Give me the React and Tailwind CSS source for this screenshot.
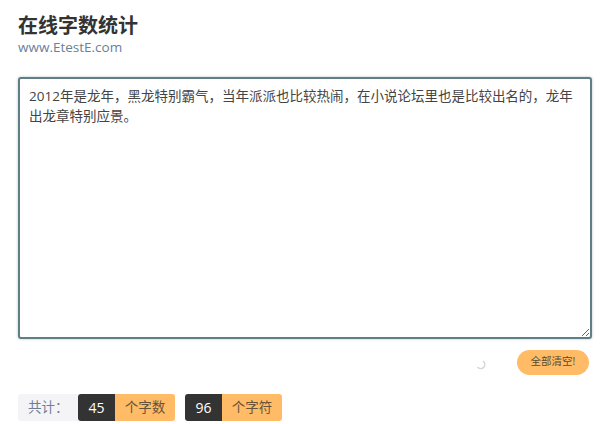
export default function App() {
  return (
    <div className="w-[600px] h-[424px] overflow-hidden bg-white pl-[18px] pr-[8px] pt-[13px] font-['Open_Sans','Noto_Sans_CJK_SC',sans-serif] text-[#333333]">
      <h1 className="text-[20px] leading-[26px] font-bold text-[#333333]">在线字数统计</h1>
      <p className="text-[13.5px] leading-[20px] mt-[-2px] text-[#6b7f99]">www.EtestE.com</p>
      <textarea
        readOnly
        className="block mt-[20px] w-[574px] h-[262px] px-[9px] py-[7px] text-[13.5px] leading-[20px] text-[#444444] bg-white rounded-[3px] border-2 border-[#5f7f86] outline-none shadow-[0_0_3px_#b8c4c8]"
        defaultValue="2012年是龙年，黑龙特别霸气，当年派派也比较热闹，在小说论坛里也是比较出名的，龙年出龙章特别应景。"
      />
      <div className="flex items-center justify-end mt-[10px] pr-[3px] h-[26px]">
        <svg width="12" height="12" viewBox="0 0 12 12" fill="none" className="mr-[31px] mt-[3px]">
          <path d="M9.5 3.5A4 4 0 0 1 4 9.5" stroke="#d4d4d4" strokeWidth="1.5" strokeLinecap="round" />
        </svg>
        <button className="w-[72px] h-[25px] rounded-full bg-[#ffbb66] text-[10.5px] text-[#5c4a30]">全部清空!</button>
      </div>
      <div className="flex items-stretch mt-[19px] h-[27px] text-[13.5px]">
        <div className="w-[60px] flex items-center pl-[10px] bg-[#f4f4f6] rounded-l-[3px] text-[#6b7f99]">共计：</div>
        <div className="w-[37px] flex items-center justify-center bg-[#333333] text-white text-[14px] font-medium rounded-l-[3px]">45</div>
        <div className="w-[60px] flex items-center justify-center bg-[#ffbb66] text-[#66543a] rounded-r-[3px]">个字数</div>
        <div className="w-[37px] ml-[10px] flex items-center justify-center bg-[#333333] text-white text-[14px] font-medium rounded-l-[3px]">96</div>
        <div className="w-[60px] flex items-center justify-center bg-[#ffbb66] text-[#66543a] rounded-r-[3px]">个字符</div>
      </div>
    </div>
  );
}
